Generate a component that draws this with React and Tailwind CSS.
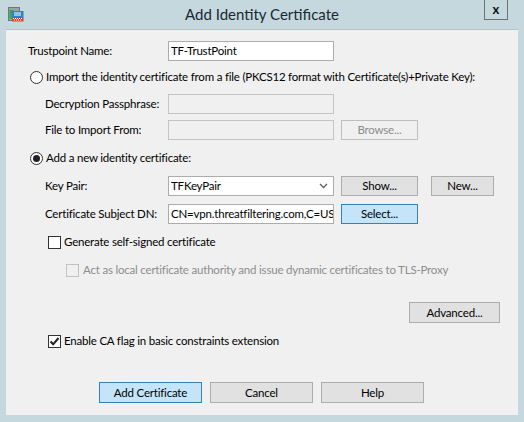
import React from "react";

function Btn({ children, className = "", variant = "normal" }) {
  const v =
    variant === "primary"
      ? "bg-[#c4e4f9] border-[#3c7fb1] text-[#000]"
      : variant === "disabled"
      ? "bg-[#f0f0f0] border-[#bfbfbf] text-[#8c8c8c]"
      : "bg-[#e1e1e1] border-[#adadad] text-[#000]";
  return (
    <div
      className={`flex items-center justify-center border h-[20px] whitespace-nowrap ${v} ${className}`}
    >
      {children}
    </div>
  );
}

function Field({ children, disabled = false, combo = false }) {
  return (
    <div
      className={`w-[166px] h-[20px] border flex items-center pl-[2px] whitespace-nowrap ${
        disabled ? "bg-[#f0f0f0] border-[#c4c4c4]" : "bg-white border-[#acacac]"
      }`}
    >
      <span className="flex-1 min-w-0 overflow-hidden leading-[16px]">{children}</span>
      {combo && (
        <svg width="9" height="6" viewBox="0 0 9 6" className="mr-[5px] shrink-0">
          <path d="M1 1 L4.5 4.5 L8 1" stroke="#606060" strokeWidth="1.3" fill="none" />
        </svg>
      )}
    </div>
  );
}

function Radio({ checked }) {
  return (
    <div className="w-[13px] h-[13px] shrink-0 rounded-full border border-[#333] bg-white flex items-center justify-center">
      {checked && <div className="w-[7px] h-[7px] rounded-full bg-[#222]" />}
    </div>
  );
}

function Check({ checked, disabled }) {
  return (
    <div
      className={`w-[13px] h-[13px] shrink-0 border flex items-center justify-center ${
        disabled ? "border-[#c2c2c2] bg-[#f0f0f0]" : "border-[#333] bg-white"
      }`}
    >
      {checked && (
        <svg width="11" height="11" viewBox="0 0 11 11">
          <path d="M1.5 5.5 L4.2 8.3 L9.5 2" stroke="#222" strokeWidth="2" fill="none" />
        </svg>
      )}
    </div>
  );
}

export default function App() {
  return (
    <div className="w-[524px] h-[422px] bg-[#c4d8de] flex flex-col font-['Lato',sans-serif] text-[11.5px] tracking-[-0.2px] text-[#000] leading-none whitespace-nowrap">
      {/* Title bar */}
      <div className="h-[29px] flex items-start">
        <div className="w-[80px] pl-[8px] pt-[7px]">
          <svg width="16" height="15" viewBox="0 0 16 15">
            <rect x="0.5" y="0.5" width="11" height="13" fill="#9aa4a8" stroke="#6e777b" />
            <rect x="1.5" y="3" width="4" height="9" fill="#3aa64a" />
            <rect x="4" y="4" width="11.5" height="6" fill="#2f7fd6" />
            <rect x="6" y="5.5" width="7" height="1" fill="#fff" />
            <rect x="6" y="7.5" width="7" height="1" fill="#fff" />
            <rect x="4" y="10" width="11.5" height="4.5" fill="#e23b3b" />
            <path d="M5 11h1v1H5zM7 11h1v1H7zM9 11h1v1H9zM11 11h1v1h-1zM13 11h1v1h-1zM6 12.5h1v1H6zM8 12.5h1v1H8zM10 12.5h1v1h-1zM12 12.5h1v1h-1z" fill="#fff" />
          </svg>
        </div>
        <div className="flex-1 text-center pt-[7px] text-[15px] tracking-normal text-[#1b2733]">
          Add Identity Certificate
        </div>
        <div className="w-[80px] flex justify-end pr-[16px]">
          <div className="w-[24px] h-[20px] border border-t-0 border-[#707070] flex items-center justify-center text-[13px] tracking-normal font-bold text-[#111]">
            x
          </div>
        </div>
      </div>

      {/* Client area */}
      <div className="mx-[6px] h-[386px] bg-[#f0f0f0] border-t border-[#b3c3c9] flex flex-col">
        <div className="mt-[11px] h-[20px] flex items-center">
          <div className="w-[162px] pl-[22px]">Trustpoint Name:</div>
          <Field>TF-TrustPoint</Field>
        </div>

        <div className="mt-[6px] h-[20px] flex items-center pl-[24px] gap-[3px]">
          <Radio />
          <span>Import the identity certificate from a file (PKCS12 format with Certificate(s)+Private Key):</span>
        </div>

        <div className="mt-[7px] h-[20px] flex items-center">
          <div className="w-[162px] pl-[39px]">Decryption Passphrase:</div>
          <Field disabled />
        </div>

        <div className="mt-[6px] h-[20px] flex items-center">
          <div className="w-[162px] pl-[39px]">File to Import From:</div>
          <Field disabled />
          <Btn variant="disabled" className="ml-[7px] w-[77px]">Browse...</Btn>
        </div>

        <div className="mt-[8px] h-[20px] flex items-center pl-[24px] gap-[3px]">
          <Radio checked />
          <span>Add a new identity certificate:</span>
        </div>

        <div className="mt-[8px] h-[20px] flex items-center">
          <div className="w-[162px] pl-[39px]">Key Pair:</div>
          <Field combo>TFKeyPair</Field>
          <Btn className="ml-[7px] w-[77px]">Show...</Btn>
          <Btn className="ml-[13px] w-[63px]">New...</Btn>
        </div>

        <div className="mt-[8px] h-[20px] flex items-center">
          <div className="w-[162px] pl-[39px]">Certificate Subject DN:</div>
          <Field>CN=vpn.threatfiltering.com,C=US</Field>
          <Btn variant="primary" className="ml-[7px] w-[77px]">Select...</Btn>
        </div>

        <div className="mt-[8px] h-[20px] flex items-center pl-[42px] gap-[3px]">
          <Check />
          <span>Generate self-signed certificate</span>
        </div>

        <div className="mt-[8px] h-[20px] flex items-center pl-[60px] gap-[4px] text-[#8d8d8d]">
          <Check disabled />
          <span>Act as local certificate authority and issue dynamic certificates to TLS-Proxy</span>
        </div>

        <div className="mt-[22px] flex justify-end pr-[18px]">
          <Btn className="w-[91px] h-[21px]">Advanced...</Btn>
        </div>

        <div className="mt-[8px] h-[20px] flex items-center pl-[42px] gap-[3px]">
          <Check checked />
          <span>Enable CA flag in basic constraints extension</span>
        </div>

        <div className="mt-[31px] flex pl-[93px] gap-[8px]">
          <Btn variant="primary" className="w-[103px] h-[21px]">Add Certificate</Btn>
          <Btn className="w-[103px] h-[21px]">Cancel</Btn>
          <Btn className="w-[103px] h-[21px]">Help</Btn>
        </div>
      </div>
    </div>
  );
}
